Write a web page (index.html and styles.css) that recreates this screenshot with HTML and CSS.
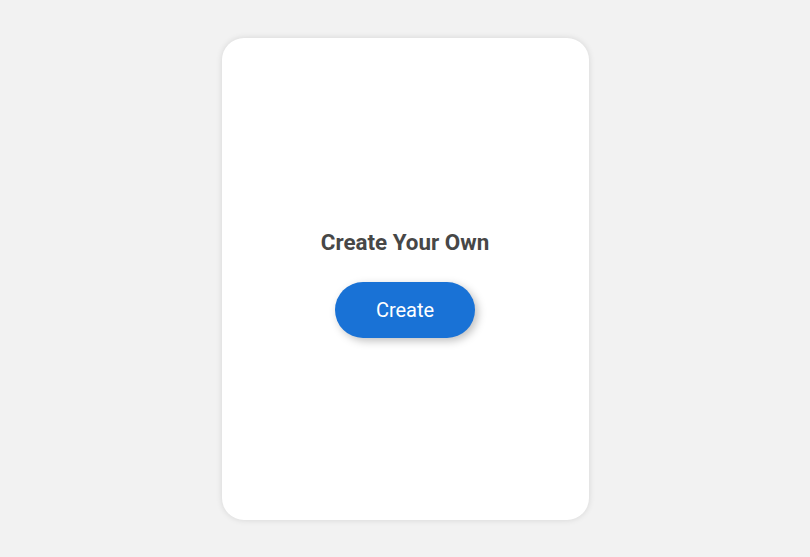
FILE: index.html
```html
<!DOCTYPE html>
<html lang="en">
<head>
    <meta charset="UTF-8">
    <meta name="viewport" content="width=device-width, initial-scale=1.0">
    <title>Create Your Own</title>
    <link rel="stylesheet" href="styles.css">
</head>
<body>
    <div class="card">
        <h2 class="card-title">Create Your Own</h2>
        <button class="create-btn">Create</button>
    </div>
</body>
</html>
```

FILE: styles.css
```css
* {
    box-sizing: border-box;
    margin: 0;
    padding: 0;
}
body {
    display: flex;
    justify-content: center;
    align-items: center;
    min-height: 100vh;
    background-color: #f2f2f2;
    font-family: Roboto, "Liberation Sans", sans-serif;
}
.card {
    width: 367px;
    height: 482px;
    background-color: #ffffff;
    border-radius: 22px;
    box-shadow: 0 0 6px rgba(0, 0, 0, 0.12);
    display: flex;
    flex-direction: column;
    justify-content: center;
    align-items: center;
    padding-top: 8px;
}
.card-title {
    font-size: 22.4px;
    font-weight: 700;
    color: #474747;
    line-height: 28px;
    margin-bottom: 26px;
}
.create-btn {
    width: 140px;
    height: 56px;
    border: none;
    border-radius: 28px;
    background-color: #1972d6;
    color: #ffffff;
    font-family: inherit;
    font-size: 20px;
    cursor: pointer;
    box-shadow: 3px 3px 8px rgba(0, 0, 0, 0.25);
}
```
